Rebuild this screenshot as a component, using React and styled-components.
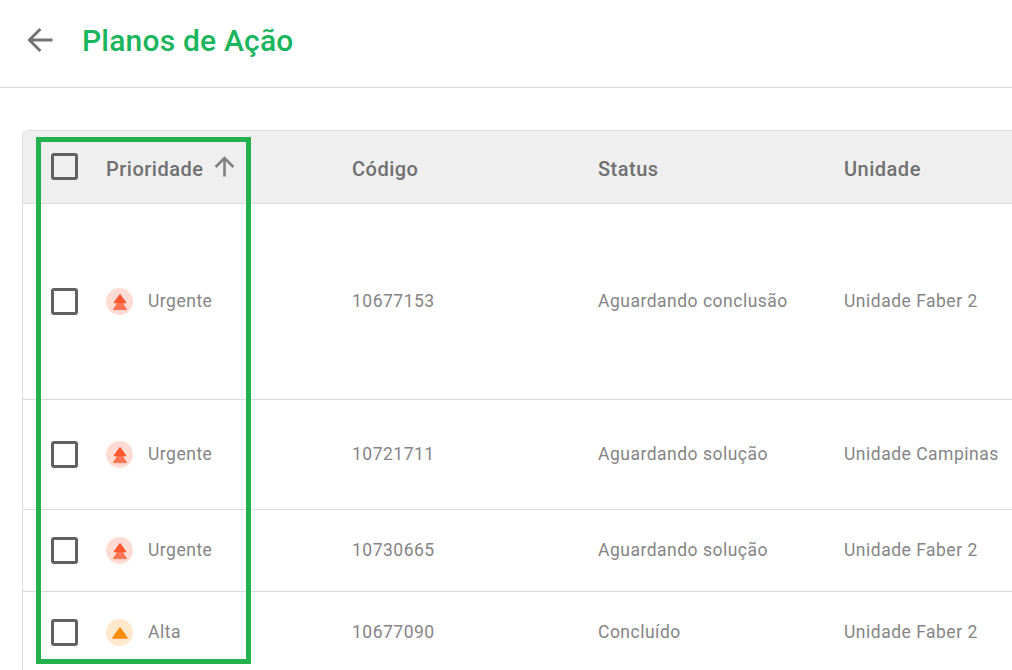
import React from 'react'
import styled, { createGlobalStyle } from 'styled-components'

const GlobalStyle = createGlobalStyle`
  html, body {
    margin: 0;
    padding: 0;
    height: 100%;
    overflow: hidden;
    background: #fff;
    font-family: Roboto, "Liberation Sans", sans-serif;
  }
`

const rows = [
  { level: 'urgent', priority: 'Urgente', code: '10677153', status: 'Aguardando conclusão', unit: 'Unidade Faber 2', height: 196 },
  { level: 'urgent', priority: 'Urgente', code: '10721711', status: 'Aguardando solução', unit: 'Unidade Campinas', height: 110 },
  { level: 'urgent', priority: 'Urgente', code: '10730665', status: 'Aguardando solução', unit: 'Unidade Faber 2', height: 82 },
  { level: 'high', priority: 'Alta', code: '10677090', status: 'Concluído', unit: 'Unidade Faber 2', height: 82 },
]

const BackIcon = () => (
  <svg width="26" height="26" viewBox="0 0 26 26" fill="none">
    <path d="M25.5 13H3M13.4 2l-11 11 11 11" stroke="#757575" strokeWidth="3" />
  </svg>
)

const SortIcon = () => (
  <svg width="21" height="21" viewBox="0 0 21 21" fill="none">
    <path d="M10.5 20.5V2.5M1.6 11l8.9-8.9 8.9 8.9" stroke="#808080" strokeWidth="2.6" />
  </svg>
)

const UrgentIcon = () => (
  <svg width="16" height="18" viewBox="0 0 16 18">
    <path d="M5.5 10H10.5L14.6 16.6H1.4z" fill="#ff7452" stroke="#ff7452" strokeLinejoin="round" />
    <path d="M8 1.8L13.6 9.6H2.4z" fill="#ff5630" stroke="#ff5630" strokeWidth="1.4" strokeLinejoin="round" />
  </svg>
)

const HighIcon = () => (
  <svg width="16" height="12" viewBox="0 0 16 12">
    <path d="M8 1L15 11H1z" fill="#ff8b00" stroke="#ff8b00" strokeWidth="1.4" strokeLinejoin="round" />
  </svg>
)

export default function App() {
  return (
    <Page>
      <GlobalStyle />
      <Header>
        <BackButton><BackIcon /></BackButton>
        <Title>Planos de Ação</Title>
      </Header>
      <Content>
        <Table>
          <HeadRow>
            <CheckCell><Checkbox /></CheckCell>
            <PriorityCell>
              <HeadLabel>Prioridade</HeadLabel>
              <SortButton><SortIcon /></SortButton>
            </PriorityCell>
            <Cell><HeadLabel>Código</HeadLabel></Cell>
            <Cell><HeadLabel>Status</HeadLabel></Cell>
            <Cell><HeadLabel>Unidade</HeadLabel></Cell>
          </HeadRow>
          {rows.map((row) => (
            <BodyRow key={row.code} $height={row.height}>
              <CheckCell><Checkbox /></CheckCell>
              <PriorityCell>
                <Badge $level={row.level}>
                  {row.level === 'urgent' ? <UrgentIcon /> : <HighIcon />}
                </Badge>
                <CellText>{row.priority}</CellText>
              </PriorityCell>
              <Cell><CellText>{row.code}</CellText></Cell>
              <Cell><CellText>{row.status}</CellText></Cell>
              <Cell><CellText>{row.unit}</CellText></Cell>
            </BodyRow>
          ))}
        </Table>
        <Highlight />
      </Content>
    </Page>
  )
}

const Page = styled.div`
  width: 1012px;
  height: 670px;
  overflow: hidden;
`

const Header = styled.header`
  height: 87px;
  display: flex;
  align-items: center;
  padding-left: 27px;
  border-bottom: 1px solid #d8d8d8;
`

const BackButton = styled.div`
  width: 55px;
  height: 26px;
  margin-top: -7px;
`

const Title = styled.h1`
  margin: -7px 0 0;
  font-size: 30px;
  font-weight: 500;
  letter-spacing: 0.2px;
  color: #1ab55c;
`

const Content = styled.main`
  position: relative;
  padding: 42px 0 0 22px;
`

const Table = styled.div`
  width: 1100px;
  border-left: 1px solid #dcdcdc;
  border-top: 1px solid #dcdcdc;
  border-top-left-radius: 6px;
  overflow: hidden;
`

const HeadRow = styled.div`
  height: 72px;
  display: flex;
  background: #efefef;
  border-bottom: 1px solid #dcdcdc;
`

const BodyRow = styled.div`
  height: ${(p) => p.$height - 1}px;
  display: flex;
  border-bottom: 1px solid #dcdcdc;
`

const CheckCell = styled.div`
  width: 83px;
  flex: none;
  display: flex;
  align-items: center;
  padding-left: 28px;
  box-sizing: border-box;

  ${HeadRow} & {
    padding-bottom: 2px;
  }
`

const Checkbox = styled.span`
  display: block;
  width: 27px;
  height: 27px;
  box-sizing: border-box;
  border: 3px solid #616161;
  border-radius: 3px;
`

const PriorityCell = styled.div`
  width: 246px;
  flex: none;
  display: flex;
  align-items: center;
`

const Cell = styled.div`
  width: 246px;
  flex: none;
  display: flex;
  align-items: center;
`

const HeadLabel = styled.span`
  margin-top: 4px;
  font-size: 20px;
  font-weight: 500;
  letter-spacing: 0.5px;
  color: #707070;
`

const SortButton = styled.span`
  display: flex;
  margin: -2px 0 0 11px;
`

const Badge = styled.span`
  width: 27px;
  height: 27px;
  flex: none;
  border-radius: 50%;
  margin-right: 15px;
  display: flex;
  align-items: center;
  justify-content: center;
  background: ${(p) => (p.$level === 'urgent' ? '#ffdbd4' : '#ffe8cc')};
`

const CellText = styled.span`
  margin-bottom: 2px;
  font-size: 17.5px;
  letter-spacing: 0.5px;
  color: #858585;
  white-space: nowrap;
`

const Highlight = styled.div`
  position: absolute;
  left: 36px;
  top: 49px;
  width: 215px;
  height: 527px;
  box-sizing: border-box;
  border: 5px solid #22b14c;
  pointer-events: none;
`
